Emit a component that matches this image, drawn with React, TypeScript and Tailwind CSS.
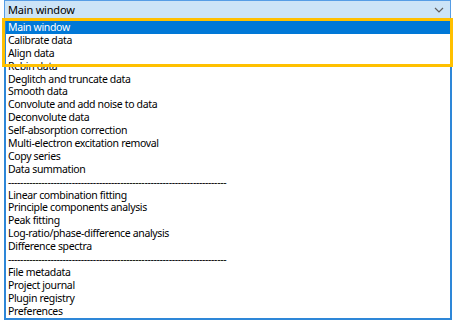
import React from "react";

const items = [
  "Main window",
  "Calibrate data",
  "Align data",
  "Rebin data",
  "Deglitch and truncate data",
  "Smooth data",
  "Convolute and add noise to data",
  "Deconvolute data",
  "Self-absorption correction",
  "Multi-electron excitation removal",
  "Copy series",
  "Data summation",
  "-".repeat(72),
  "Linear combination fitting",
  "Principle components analysis",
  "Peak fitting",
  "Log-ratio/phase-difference analysis",
  "Difference spectra",
  "-".repeat(72),
  "File metadata",
  "Project journal",
  "Plugin registry",
  "Preferences",
];

function Chevron() {
  return (
    <svg width="10" height="6" viewBox="0 0 10 6" className="text-[#606060]">
      <path d="M1 1 L5 5 L9 1" fill="none" stroke="currentColor" strokeWidth="1.2" />
    </svg>
  );
}

export default function App() {
  return (
    <div
      className="relative w-[453px] h-[320px] bg-white overflow-hidden text-[10.5px] tracking-[-0.35px] text-black"
      style={{ fontFamily: '"Noto Sans", "Open Sans", sans-serif' }}
    >
      <div className="ml-[4px] mr-[2px] h-[19px] flex items-center justify-between bg-[#cce4f7] border border-[#569de5] pl-[3px] pr-[6px] text-[11px] tracking-[-0.2px]">
        <span className="leading-[13px]">Main window</span>
        <Chevron />
      </div>
      <div className="ml-[4px] mr-[1px] h-[301px] border-2 border-t-0 border-[#2e87d8] pt-[2px] flex flex-col">
        {items.map((t, i) => (
          <div
            key={i}
            className={`h-[12.9px] leading-[13px] pl-[2px] whitespace-nowrap ${
              i === 0 ? "bg-[#0078d7] text-white" : ""
            }`}
          >
            {t}
          </div>
        ))}
      </div>
      <div className="absolute left-[2px] top-[18px] w-[451px] h-[49px] border-[3px] border-[#ffc000] pointer-events-none" />
    </div>
  );
}
